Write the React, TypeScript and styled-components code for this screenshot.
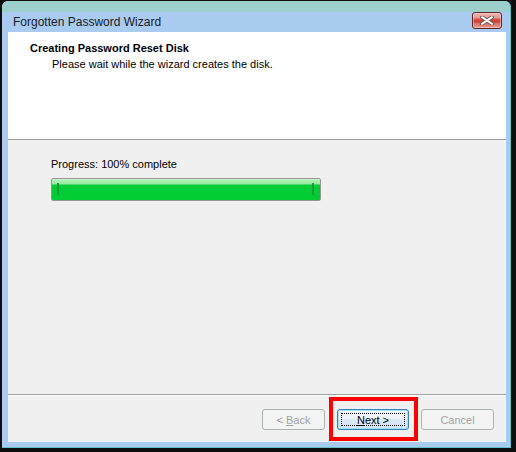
import React from "react";
import styled, { createGlobalStyle, css } from "styled-components";

const Global = createGlobalStyle`
  *, *::before, *::after {
    box-sizing: border-box;
  }
  html, body {
    margin: 0;
    padding: 0;
    background: #0d0d0d;
    overflow: hidden;
  }
  body {
    width: 516px;
    height: 452px;
    font-family: "Liberation Sans", Arial, sans-serif;
  }
`;

const Window = styled.div`
  margin: 1px 0 0 2px;
  width: 509px;
  height: 447px;
  display: flex;
  flex-direction: column;
  background: #a9cbef;
  border-right: 1px solid #62c2c9;
  border-bottom: 1px solid #62c2c9;
  border-radius: 6px 6px 0 0;
  overflow: hidden;
`;

const TopBand = styled.div`
  height: 11px;
  flex: none;
  background: #9dcfcc;
`;

const TitleBar = styled.div`
  height: 20px;
  flex: none;
  display: flex;
  align-items: flex-start;
  justify-content: space-between;
  padding: 0 8px 0 11px;
`;

const TitleText = styled.span`
  font-family: "Liberation Sans", Arial, sans-serif;
  font-size: 12px;
  line-height: 20px;
  color: #1a1a2a;
`;

const CloseButton = styled.div`
  width: 30px;
  height: 17px;
  border: 1px solid #5e2424;
  border-radius: 3px;
  display: flex;
  align-items: center;
  justify-content: center;
  background: linear-gradient(
    to bottom,
    #eeb2ae 0,
    #e49a96 5px,
    #d8554a 6px,
    #cc3b2e 9px,
    #d86c62 10px,
    #e29a92 15px
  );
  box-shadow: inset 0 0 0 1px rgba(255, 220, 220, 0.55);
`;

const Content = styled.div`
  flex: 1;
  margin: 0 4px 5px 6px;
  display: flex;
  flex-direction: column;
  background: #f0f0f0;
`;

const Header = styled.div`
  height: 108px;
  flex: none;
  background: #ffffff;
  border-bottom: 1px solid #a0a0a0;
  padding: 10px 0 0 22px;
  display: flex;
  flex-direction: column;
`;

const HeaderTitle = styled.div`
  font-weight: bold;
  font-size: 11px;
  line-height: 13px;
  color: #000;
`;

const HeaderSubtitle = styled.div`
  font-size: 11px;
  line-height: 13px;
  color: #000;
  margin: 3px 0 0 22px;
`;

const Body = styled.div`
  flex: 1;
  padding: 18px 0 0 43px;
  display: flex;
  flex-direction: column;
  align-items: flex-start;
`;

const Label = styled.div`
  font-size: 11px;
  line-height: 13px;
  color: #000;
`;

const ProgressBar = styled.div`
  position: relative;
  margin-top: 7px;
  width: 270px;
  height: 23px;
  border: 1px solid #979797;
  border-radius: 2px;
  background: linear-gradient(
    to bottom,
    #d4f8d6 0,
    #b0f0b6 1px,
    #96e9a2 5px,
    #06cd36 6px,
    #00cc33 100%
  );
  &::before,
  &::after {
    content: "";
    position: absolute;
    top: 4px;
    width: 2px;
    height: 12px;
    background: #179a3c;
  }
  &::before {
    left: 5px;
  }
  &::after {
    right: 6px;
  }
`;

const Footer = styled.div`
  height: 48px;
  flex: none;
  border-top: 1px solid #a0a0a0;
  box-shadow: inset 0 1px 0 #ffffff;
  padding: 14px 12px 0 0;
  display: flex;
  justify-content: flex-end;
  align-items: flex-start;
  gap: 12px;
`;

const Button = styled.div<{ $w: number; $disabled?: boolean; $focused?: boolean }>`
  position: relative;
  width: ${(p) => p.$w}px;
  height: 21px;
  border-radius: 3px;
  display: flex;
  align-items: center;
  justify-content: center;
  white-space: pre;
  font-size: 11px;
  color: #000;
  border: 1px solid #707070;
  background: linear-gradient(to bottom, #f2f2f2 0, #ebebeb 50%, #dddddd 51%, #cfcfcf 100%);
  ${(p) =>
    p.$disabled &&
    css`
      border-color: #adb2b5;
      background: #f4f4f4;
      color: #a3a3a3;
    `}
  ${(p) =>
    p.$focused &&
    css`
      border-color: #3c7fb1;
      background: linear-gradient(to bottom, #f3f7fb 0, #edf3f9 45%, #dce9f6 50%, #d2e3f3 100%);
      box-shadow: inset 0 0 0 1px #9fe2fb;
    `}
`;

const FocusRect = styled.span`
  position: absolute;
  inset: 3px;
  border: 1px dotted #000;
  pointer-events: none;
`;

const Accel = styled.span`
  text-decoration: underline;
`;

const Highlight = styled.span`
  position: absolute;
  left: -9px;
  top: -13px;
  width: 89px;
  height: 44px;
  border: 4px solid #ff0000;
  pointer-events: none;
`;

const CloseIcon = () => (
  <svg width="14" height="9" viewBox="0 0 14 9">
    <path d="M2 1.2 L12 7.8 M12 1.2 L2 7.8" stroke="#5b4a4a" strokeWidth="3.6" strokeLinecap="round" />
    <path d="M2 1.2 L12 7.8 M12 1.2 L2 7.8" stroke="#ffffff" strokeWidth="2" strokeLinecap="round" />
  </svg>
);

export default function App() {
  return (
    <>
      <Global />
      <Window>
        <TopBand />
        <TitleBar>
          <TitleText>Forgotten Password Wizard</TitleText>
          <CloseButton>
            <CloseIcon />
          </CloseButton>
        </TitleBar>
        <Content>
          <Header>
            <HeaderTitle>Creating Password Reset Disk</HeaderTitle>
            <HeaderSubtitle>Please wait while the wizard creates the disk.</HeaderSubtitle>
          </Header>
          <Body>
            <Label>Progress: 100% complete</Label>
            <ProgressBar />
          </Body>
          <Footer>
            <Button $w={63} $disabled>
              {"< "}
              <Accel>B</Accel>
              {"ack"}
            </Button>
            <Button $w={72} $focused>
              <FocusRect />
              <Accel>N</Accel>
              {"ext >"}
              <Highlight />
            </Button>
            <Button $w={73} $disabled>
              Cancel
            </Button>
          </Footer>
        </Content>
      </Window>
    </>
  );
}
